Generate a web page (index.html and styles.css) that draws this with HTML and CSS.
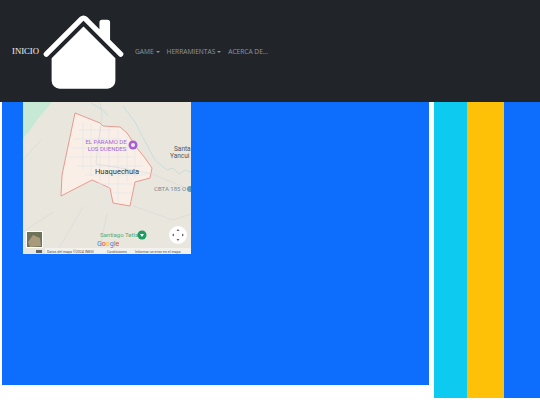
FILE: index.html
```html
<!DOCTYPE html>
<html lang="en">
<head>
    <meta charset="UTF-8">
    <title>Inicio</title>
    <link rel="stylesheet" href="styles.css">
</head>
<body>
    <nav class="navbar">
        <a class="brand" href="#">INICIO</a>
        <svg class="home-icon" viewBox="0 0 16 16" fill="#fff">
            <path d="M8.707 1.5a1 1 0 0 0-1.414 0L.646 8.146a.5.5 0 0 0 .708.708L8 2.207l6.646 6.647a.5.5 0 0 0 .708-.708L13 5.793V2.5a.5.5 0 0 0-.5-.5h-1a.5.5 0 0 0-.5.5v1.293z"/>
            <path d="m8 3.293 6 6V13.5a1.5 1.5 0 0 1-1.5 1.5h-9A1.5 1.5 0 0 1 2 13.5V9.293z"/>
        </svg>
        <ul class="nav-links">
            <li class="nav-link dropdown">GAME</li>
            <li class="nav-link dropdown">HERRAMIENTAS</li>
            <li class="nav-link">ACERCA DE...</li>
        </ul>
    </nav>
    <div class="content">
        <main class="main-col">
            <svg class="map" viewBox="0 0 168 152" width="168" height="152">
                <rect width="168" height="152" fill="#e9e6de"/>
                <!-- green patch, top left -->
                <path d="M0 0H29L14 18L6 30L0 36Z" fill="#c6e9d6"/>
                <!-- town outline -->
                <path d="M52 11L77 21L80 24L97 25L104 31L114 46L122 56L129 66L127 76L112 80L107 104L90 101L87 86L69 78L38 94L39 73Z" fill="#f9efe6" stroke="#e8847a" stroke-width="0.8"/>
                <!-- street grid -->
                <g class="streets">
                    <path d="M56 28H90M50 37H98M48 46H106M46 55H112M54 64H120M62 73H124M72 82H110M90 91H108"/>
                    <path d="M60 20V68M68 22V74M77 24V84M86 26V100M95 28V100M104 34V80M112 48V76"/>
                </g>
                <g class="roads">
                    <path d="M77 0L79 12L78 24L75 40L73 62L110 68L129 72L168 88"/>
                    <path d="M84 112L80 130L78 146"/>
                    <path d="M0 58L18 38M30 110L0 130M60 105L36 146M110 104L150 118L168 112"/>
                </g>
                <path class="river" d="M68 1L80 8L85 14M100 4L112 20L125 45L132 58L144 68L150 66L156 72L162 68L168 70"/>
                <text class="map-poi" x="83" y="42" text-anchor="middle">EL PARAMO DE</text>
                <text class="map-poi" x="84" y="49" text-anchor="middle">LOS DUENDES</text>
                <circle cx="110" cy="43" r="4.5" fill="#a55fd1"/>
                <circle cx="110" cy="43" r="2" fill="#f3e6fa"/>
                <text class="map-town" x="94" y="72" text-anchor="middle">Huaquechula</text>
                <text class="map-place" x="151" y="49">Santa</text>
                <text class="map-place" x="147" y="56">Yancui</text>
                <text class="map-road" x="131" y="89">CBTA 185 O</text>
                <circle cx="167" cy="87" r="3" fill="#6f9fb8"/>
                <text class="map-park" x="77" y="135">Santiago Tetla</text>
                <circle cx="119" cy="133" r="4.5" fill="#1e9a63"/>
                <path d="M117 132h4l-2 3z" fill="#fff"/>
                <text class="map-google" x="74" y="143.5"><tspan fill="#4285f4">G</tspan><tspan fill="#ea4335">o</tspan><tspan fill="#fbbc05">o</tspan><tspan fill="#4285f4">g</tspan><tspan fill="#34a853">l</tspan><tspan fill="#ea4335">e</tspan></text>
                <rect x="3.5" y="129.5" width="16" height="16" fill="#6d7358" stroke="#fff"/>
                <path d="M5 140L10 133L17 136L18 144L7 145Z" fill="#a89a7a"/>
                <circle cx="155" cy="133" r="9" fill="#fff"/>
                <path d="M155 127l-1.5 2h3zM155 139l-1.5-2h3zM149 133l2-1.5v3zM161 133l-2-1.5v3z" fill="#666"/>
                <rect x="22" y="146" width="146" height="6" fill="#f2f1ed"/>
                <rect x="13" y="148" width="6" height="3" fill="#666"/>
                <text class="map-terms" x="24" y="150.5">Datos del mapa ©2024 INEGI</text>
                <text class="map-terms" x="84" y="150.5">Condiciones</text>
                <text class="map-terms" x="112" y="150.5">Informar un error en el mapa</text>
            </svg>
        </main>
        <aside class="side">
            <div class="col-info"></div>
            <div class="col-warning"></div>
            <div class="col-primary"></div>
        </aside>
    </div>
</body>
</html>
```

FILE: styles.css
```css
body {
    margin: 0;
    background-color: #fff;
    font-family: 'Open Sans', sans-serif;
    overflow: hidden;
}

.navbar {
    display: flex;
    align-items: center;
    height: 102px;
    padding-left: 12px;
    background-color: #212529;
}

.brand {
    color: #f5f5f5;
    font-family: 'Liberation Serif', serif;
    font-size: 8.7px;
    text-decoration: none;
}

.home-icon {
    width: 85px;
    height: 85px;
    margin-left: 2px;
}

.nav-links {
    display: flex;
    gap: 7px;
    margin: 0;
    padding: 0 0 0 9px;
    list-style: none;
}

.nav-link {
    color: rgba(255, 255, 255, 0.5);
    font-size: 6.6px;
}

/* little caret after dropdown items */
.dropdown::after {
    content: "";
    display: inline-block;
    margin-left: 2px;
    vertical-align: 1px;
    border-top: 2px solid;
    border-left: 2px solid transparent;
    border-right: 2px solid transparent;
}

.content {
    display: flex;
    align-items: flex-start;
    padding-left: 2px;
}

.main-col {
    width: 406px;
    height: 283px;
    padding-left: 21px;
    background-color: #0d6efd;
}

.map {
    display: block;
}

.streets path {
    fill: none;
    stroke: #e2e5ec;
    stroke-width: 0.7;
}

.roads path {
    fill: none;
    stroke: #d4d6d6;
    stroke-width: 0.6;
}

.river {
    fill: none;
    stroke: #b5dbe0;
    stroke-width: 0.7;
}

.map-poi {
    fill: #a468d6;
    font-family: 'Roboto', sans-serif;
    font-size: 6px;
}

.map-town {
    fill: #333;
    font-family: 'Roboto', sans-serif;
    font-size: 7.5px;
}

.map-place {
    fill: #555;
    font-family: 'Roboto', sans-serif;
    font-size: 6.5px;
}

.map-road {
    fill: #7d8a94;
    font-family: 'Roboto', sans-serif;
    font-size: 6px;
}

.map-park {
    fill: #4fae82;
    font-family: 'Roboto', sans-serif;
    font-size: 6px;
}

.map-google {
    font-family: 'Roboto', sans-serif;
    font-size: 7px;
}

.map-terms {
    fill: #555;
    font-family: 'Roboto', sans-serif;
    font-size: 3.6px;
}

.side {
    display: flex;
    height: 296px;
    margin-left: 5px;
}

.col-info {
    width: 33px;
    background-color: #0dcaf0;
}

.col-warning {
    width: 37px;
    background-color: #ffc107;
}

.col-primary {
    width: 36px;
    background-color: #0d6efd;
}
```
